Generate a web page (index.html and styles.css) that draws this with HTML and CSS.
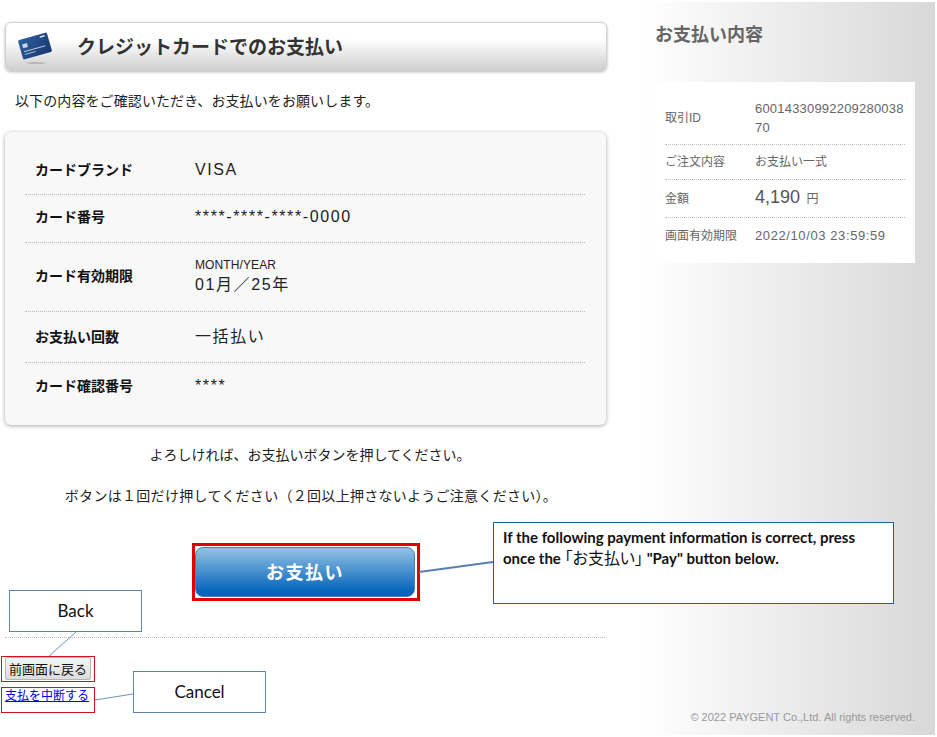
FILE: index.html
```html
<!DOCTYPE html>
<html lang="ja">
<head>
    <meta charset="UTF-8">
    <meta name="viewport" content="width=device-width, initial-scale=1.0">
    <title>クレジットカードでのお支払い</title>
    <link rel="stylesheet" href="styles.css">
</head>
<body>
    <div class="page">
        <div class="main">
            <div class="title-box">
                <svg class="card-icon" width="40" height="36" viewBox="0 0 40 36">
                    <defs>
                        <linearGradient id="cardBlue" x1="0" y1="0" x2="1" y2="1">
                            <stop offset="0" stop-color="#2f5f9e"/>
                            <stop offset="1" stop-color="#17386f"/>
                        </linearGradient>
                    </defs>
                    <ellipse cx="21" cy="33" rx="10" ry="0.7" fill="#aaa"/>
                    <g transform="rotate(-16 20 16)">
                        <rect x="5" y="6" width="30" height="20" rx="1.5" fill="url(#cardBlue)"/>
                        <rect x="8" y="11" width="5" height="4" fill="#c9d6e6"/>
                        <rect x="8" y="18" width="22" height="1" fill="#b7c8de"/>
                        <rect x="8" y="21" width="11" height="1" fill="#9db3cf"/>
                        <rect x="27" y="8" width="5" height="1.5" fill="#e4ebf4"/>
                    </g>
                </svg>
                <h1>クレジットカードでのお支払い</h1>
            </div>
            <p class="lead">以下の内容をご確認いただき、お支払いをお願いします。</p>

            <!-- 入力内容 -->
            <div class="card">
                <div class="rows">
                    <div class="row"><span class="label">カードブランド</span><span class="value">VISA</span></div>
                    <div class="row row-up"><span class="label">カード番号</span><span class="value">****-****-****-0000</span></div>
                    <div class="row row-up">
                        <span class="label">カード有効期限</span>
                        <span class="value"><small>MONTH/YEAR</small>01月／25年</span>
                    </div>
                    <div class="row"><span class="label">お支払い回数</span><span class="value">一括払い</span></div>
                    <div class="row row-up"><span class="label">カード確認番号</span><span class="value">****</span></div>
                </div>
            </div>

            <p class="note">よろしければ、お支払いボタンを押してください。</p>
            <p class="note note-second">ボタンは１回だけ押してください（２回以上押さないようご注意ください）。</p>

            <div class="pay-wrap">
                <button class="pay" type="button">お支払い</button>
            </div>

            <div class="divider"></div>
            <button class="back" type="button">前画面に戻る</button>
            <a class="cancel" href="#">支払を中断する</a>
        </div>

        <div class="side">
            <h2>お支払い内容</h2>
            <div class="summary">
                <div class="sum-row"><span class="sum-label">取引ID</span><span class="sum-value sum-id">6001433099220928003870</span></div>
                <div class="sum-row"><span class="sum-label">ご注文内容</span><span class="sum-value">お支払い一式</span></div>
                <div class="sum-row"><span class="sum-label">金額</span><span class="sum-value"><b class="amount">4,190</b> 円</span></div>
                <div class="sum-row"><span class="sum-label">画面有効期限</span><span class="sum-value sum-date">2022/10/03 23:59:59</span></div>
            </div>
            <p class="copy">© 2022 PAYGENT Co.,Ltd. All rights reserved.</p>
        </div>

        <!-- 説明の注釈 -->
        <svg class="lines" width="937" height="737">
            <line x1="49" y1="654" x2="76" y2="630" stroke="#6d93b8" stroke-width="1"/>
            <line x1="95" y1="698" x2="133" y2="692" stroke="#6d93b8" stroke-width="1"/>
            <line x1="419" y1="570" x2="493" y2="560" stroke="#5580ad" stroke-width="2"/>
        </svg>
        <div class="mark mark-back"></div>
        <div class="mark mark-cancel"></div>
        <div class="callout callout-back">Back</div>
        <div class="callout callout-cancel">Cancel</div>
        <div class="callout-info">If the following payment information is correct, press once the <span class="ja">「お支払い」</span> "Pay" button below.</div>
    </div>
</body>
</html>
```

FILE: styles.css
```css
* {
    box-sizing: border-box;
}
html, body {
    margin: 0;
    padding: 0;
    background: #fff;
}
body {
    font-family: "Liberation Sans", "Noto Sans CJK JP", sans-serif;
    font-size: 14px;
    line-height: 20px;
    color: #222;
}
.page {
    position: relative;
    display: flex;
    width: 935px;
    height: 733px;
    margin-top: 2px;
    background: linear-gradient(to right, #fff 0, #fff 640px, #d8d8d8 935px);
    overflow: hidden;
}
.main {
    flex: 0 0 655px;
    padding: 20px 48px 0 5px;
}
.title-box {
    display: flex;
    align-items: center;
    height: 49px;
    padding: 2px 0 0 9px;
    border: 1px solid #d0d0d0;
    border-radius: 6px;
    background: linear-gradient(to bottom, #fff 0, #fff 35%, #cfcfcf 100%);
    box-shadow: 0 1px 3px rgba(0, 0, 0, 0.3);
}
.card-icon {
    flex: none;
    margin-right: 22px;
}
.title-box h1 {
    margin: 0;
    font-size: 19px;
    font-weight: bold;
    color: #333;
}
.lead {
    margin: 20px 0 21px 10px;
    letter-spacing: 0.1px;
    color: #222;
}
.card {
    height: 293px;
    margin-right: 1px;
    padding: 13px 21px 13px 20px;
    border-radius: 6px;
    background: #f8f8f8;
    box-shadow: 0 1px 4px rgba(0, 0, 0, 0.35);
}
.rows {
    display: grid;
    grid-template-rows: 50px 48px 69px 51px 49px;
}
.row {
    display: flex;
    align-items: center;
    padding-left: 10px;
    border-bottom: 1px dotted #bbb;
}
.row-up {
    padding-bottom: 3px;
}
.row:last-child {
    border-bottom: none;
}
.label {
    flex: 0 0 160px;
    font-weight: bold;
    color: #111;
}
.value {
    font-size: 16px;
    letter-spacing: 1.6px;
    color: #222;
}
.value small {
    display: block;
    margin-bottom: 2px;
    font-size: 12px;
    line-height: 16px;
    letter-spacing: 0.1px;
}
.note {
    margin: 20px 0 0;
    padding-left: 8px;
    text-align: center;
}
.note-second {
    margin-top: 21px;
    padding-left: 10px;
    letter-spacing: 0.3px;
}
.pay-wrap {
    display: block;
    width: 228px;
    height: 58px;
    margin: 37px auto 0;
    padding: 1px 2px 1px 0;
    border: 3px solid #e00000;
}
.pay {
    display: block;
    width: 220px;
    height: 50px;
    padding: 0 0 3px;
    border: 1px solid #4a80ad;
    border-radius: 8px;
    background: linear-gradient(to bottom, #93c2e5 0, #0565bb 90%);
    color: #fff;
    font-family: inherit;
    font-size: 18px;
    font-weight: bold;
    letter-spacing: 1.5px;
    cursor: pointer;
}
.divider {
    margin-top: 36px;
    margin-right: 2px;
    border-top: 1px dotted #bbb;
}
.back {
    display: block;
    width: 86px;
    height: 23px;
    margin-top: 19px;
    padding: 0;
    border: 1px solid #b5b5b5;
    border-radius: 2px;
    background: linear-gradient(to bottom, #f5f5f5, #dcdcdc);
    color: #111;
    font-family: inherit;
    font-size: 13px;
}
.cancel {
    display: block;
    margin-top: 6px;
    font-size: 12px;
    color: #0000ee;
}
.side {
    flex: 1;
    display: flex;
    flex-direction: column;
    padding: 21px 20px 0 0;
}
.side h2 {
    margin: 0;
    font-size: 18px;
    line-height: 24px;
    color: #666;
}
.summary {
    margin-top: 35px;
    padding: 10px;
    background: #fff;
    display: grid;
    grid-template-rows: 53px 35px 38px 35px;
}
.sum-row {
    display: flex;
    align-items: center;
    border-bottom: 1px dotted #bbb;
    font-size: 12px;
    color: #666;
}
.sum-row:last-child {
    border-bottom: none;
}
.sum-label {
    flex: 0 0 90px;
}
.sum-value {
    flex: 1;
    min-width: 0;
    line-height: 19px;
    word-break: break-all;
}
.sum-id {
    font-size: 13px;
    letter-spacing: 0.2px;
}
.sum-date {
    font-size: 13px;
    letter-spacing: 0.6px;
}
.amount {
    font-size: 18px;
    font-weight: normal;
    margin-right: 3px;
    color: #555;
}
.copy {
    margin: auto 0 8px;
    font-size: 11px;
    white-space: nowrap;
    text-align: right;
    color: #999;
}
.lines {
    position: absolute;
    left: 0;
    top: 0;
    pointer-events: none;
}
.mark {
    position: absolute;
    left: 1px;
    width: 94px;
    height: 26px;
    border: 1px solid #c8161d;
}
.mark-back {
    top: 654px;
}
.mark-cancel {
    top: 685px;
}
.callout {
    position: absolute;
    display: flex;
    align-items: center;
    justify-content: center;
    width: 133px;
    height: 42px;
    border: 1px solid #5b84a8;
    background: #fff;
    font-family: Lato, sans-serif;
    font-size: 17px;
    color: #111;
}
.callout-back {
    left: 9px;
    top: 588px;
}
.callout-cancel {
    left: 133px;
    top: 669px;
}
.callout-info {
    position: absolute;
    left: 493px;
    top: 520px;
    width: 401px;
    height: 82px;
    padding: 4px 30px 4px 9px;
    border: 1px solid #1f6391;
    background: #fff;
    font-family: Lato, sans-serif;
    font-size: 15px;
    line-height: 21px;
    font-weight: bold;
    color: #111;
}
.callout-info .ja {
    font-family: "Noto Sans CJK JP", sans-serif;
    font-weight: normal;
    font-size: 16px;
    line-height: 1;
    font-feature-settings: "palt";
}
```
